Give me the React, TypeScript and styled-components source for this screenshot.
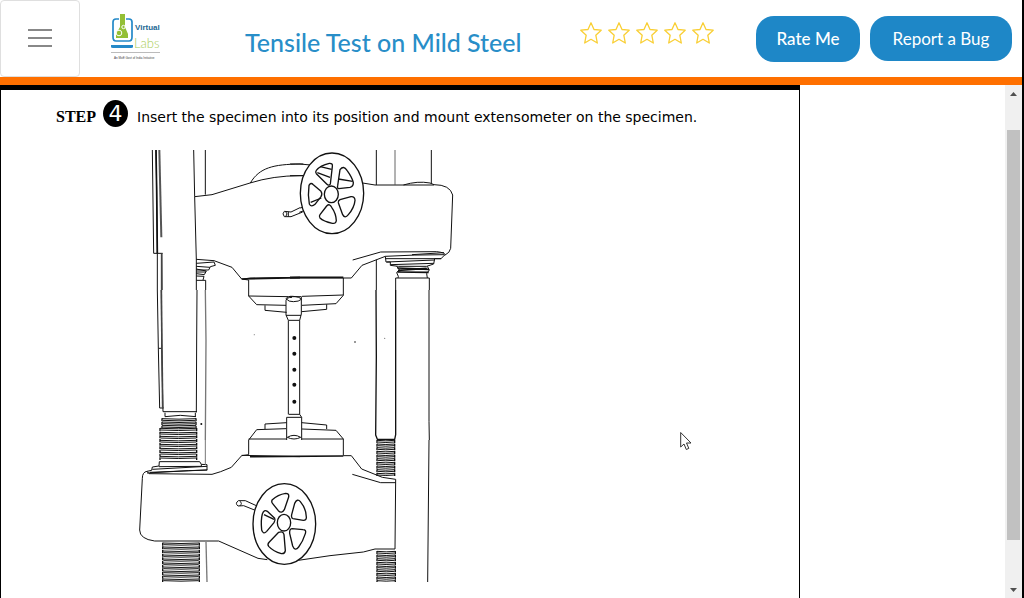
import React from 'react';
import styled, { createGlobalStyle } from 'styled-components';

const GlobalStyle = createGlobalStyle`
  *, *::before, *::after { box-sizing: border-box; }
  html, body, #root { height: 100%; }
  body { margin: 0; background: #fff; overflow: hidden; }
`;

const Page = styled.div`
  position: relative;
  display: flex;
  flex-direction: column;
  height: 100vh;
  border-right: 2px solid #000;
  font-family: Lato, 'Liberation Sans', sans-serif;
`;

const Header = styled.header`
  flex: none;
  display: flex;
  align-items: flex-start;
  height: 85px;
  padding-right: 10px;
  border-bottom: 8px solid #ff7000;
`;

const MenuButton = styled.button`
  display: flex;
  flex-direction: column;
  align-items: center;
  justify-content: center;
  gap: 6px;
  width: 80px;
  height: 77px;
  padding: 0 0 2px;
  background: #fff;
  border: 1px solid #dfdfdf;
  border-radius: 4px;
`;

const MenuBar = styled.span`
  width: 24px;
  height: 2px;
  background: #888;
`;

const LogoLink = styled.a`
  display: block;
  width: 50px;
  height: 48px;
  margin: 13px 0 0 31px;
`;

const Title = styled.h1`
  flex: 1;
  margin: 25px 0 0 84px;
  font-size: 25px;
  line-height: 34px;
  font-weight: 500;
  white-space: nowrap;
  color: #288ec8;
`;

const Stars = styled.div`
  display: flex;
  gap: 6px;
  margin: 22px 42px 0 0;
`;

const StarButton = styled.button`
  display: block;
  width: 22px;
  height: 22px;
  padding: 0;
  background: none;
  border: 0;
`;

const Actions = styled.div`
  display: flex;
  gap: 10px;
  margin-top: 16px;
`;

const ActionButton = styled.button<{ $wide?: boolean }>`
  width: ${(p) => (p.$wide ? 142 : 104)}px;
  height: ${(p) => (p.$wide ? 45 : 46)}px;
  padding: 0;
  border: 0;
  border-radius: 18px;
  background: #1e87c7;
  color: #fff;
  font-family: inherit;
  font-size: 17px;
  line-height: 24px;
  font-weight: ${(p) => (p.$wide ? 400 : 500)};
  white-space: nowrap;
`;

const Body = styled.div`
  flex: 1;
  min-height: 0;
  display: flex;
  justify-content: space-between;
`;

const Stage = styled.main`
  flex: 0 1 800px;
  overflow: hidden;
  padding: 9px 0 0 55px;
  border: solid #000;
  border-width: 5px 1px 0 1px;
`;

const Step = styled.div`
  display: flex;
  align-items: center;
  height: 36px;
`;

const StepLabel = styled.strong`
  font: bold 16px/20px 'Liberation Serif', serif;
  width: 47px;
`;

const StepNumber = styled.span`
  width: 25px;
  height: 27px;
  margin-bottom: 7px;
  border-radius: 50%;
  background: #000;
  color: #fff;
  text-align: center;
  font: 22px/27px 'DejaVu Sans', sans-serif;
`;

const StepText = styled.p`
  margin: 0 0 0 9px;
  font: 14px/20px 'DejaVu Sans', sans-serif;
  white-space: nowrap;
`;

const Drawing = styled.svg`
  display: block;
  width: 320px;
  height: 432px;
  margin: 15px 0 0 82px;
`;

const Scrollbar = styled.div`
  flex: none;
  display: flex;
  flex-direction: column;
  align-items: center;
  width: 17px;
  background: #f0f0f0;
`;

const ScrollArrow = styled.button`
  flex: none;
  display: flex;
  align-items: center;
  justify-content: center;
  width: 17px;
  height: 17px;
  padding: 0;
  border: 0;
  background: none;
`;

const Track = styled.div`
  flex: 1;
  padding-top: 28px;
`;

const Thumb = styled.div`
  width: 13px;
  height: 91%;
  background: #c1c1c1;
`;

const Pointer = styled.svg`
  position: absolute;
  left: 680px;
  top: 431px;
  width: 12px;
  height: 20px;
`;

function Logo() {
  return (
    <svg width="50" height="48" viewBox="0 0 50 48" role="img" aria-label="Virtual Labs">
      <path d="M8 6H5Q2 6 2 9V24Q2 28 5 28H18Q21 28 21 24V9Q21 6 18 6H15" fill="none" stroke="#2489c8" strokeWidth="1.7" />
      <path d="M9 1h5v13l3 7v4H5v-4l4-7z" fill="#94bf35" />
      <circle cx="8" cy="20" r="2.8" fill="#94bf35" stroke="#fff" />
      <circle cx="12.500" cy="14" r="1.700" fill="#94bf35" stroke="#fff" />
      <path d="M0 32H22V34Q22 35 20 35H2Q0 35 0 34Z" fill="#2489c8" />
      <text x="24" y="17" fontFamily="Liberation Sans, sans-serif" fontSize="8" fontWeight="700" fill="#236894">Virtual</text>
      <text x="23" y="35" fontFamily="Lato, sans-serif" fontSize="13" fontWeight="300" fill="#a9cc55">Labs</text>
      <path d="M0 39.500H49" stroke="#bbb" />
      <text x="3" y="46" fontFamily="Liberation Sans, sans-serif" fontSize="3" fill="#444">An MoE Govt of India Initiative</text>
    </svg>
  );
}

interface CoilProps {
  left: number;
  right: number;
  top: number;
  bottom: number;
  pitch?: number;
}

function Coil({ left, right, top, bottom, pitch = 11 }: CoilProps) {
  const turns: React.ReactNode[] = [];
  for (let y = top; y < bottom - 3; y += pitch) {
    turns.push(
      <path key={y} d={`M${left} ${y + 1} Q${(left + right) / 2} ${y + 4} ${right} ${y + 1} M${left + 2} ${y + 6} Q${(left + right) / 2} ${y + 9} ${right - 2} ${y + 6}`} />,
    );
  }
  return (
    <g>
      <g strokeWidth="3">{turns}</g>
      <path d={`M${left} ${top}V${bottom}M${right} ${top}V${bottom}`} strokeWidth="4" strokeDasharray="9 2" />
    </g>
  );
}

/* Drawn at three units to the pixel so that the fine line work stays in whole numbers. */
function TestingMachine() {
  return (
    <Drawing viewBox="0 0 960 1296" role="img" aria-label="Specimen held between the crossheads of a universal testing machine">
      <g fill="none" stroke="#111" strokeWidth="3" strokeLinejoin="round">
        <g transform="translate(-24 -30)">
          <path d="M67 30L71 340H98M78 30L80 150L82 340V450M95 340L96 450" />
          <path d="M78 30L80 150L82 340" strokeWidth="5" />
          <path d="M88 30L94 292" stroke="#555" strokeWidth="6" />
          <path d="M95 340L95 450" stroke="#444" strokeWidth="5" />
          <path d="M191 30L194 170L199 360V450M226 30V164M194 170L246 164L360 129Q430 107 510 107" />
          <path d="M361 129C388 83 430 73 510 72" />
          <path d="M199 358L252 362L306 382L335 417L356 420V450M340 417L360 414L510 412" />
          <path d="M199 370L252 366L256 376L241 380L236 390H199M199 379L240 382M199 387L229 393L223 404L199 401M199 396H228M199 408L222 409L219 420M199 421H227V450" />
          <path d="M335 417L510 413" strokeWidth="5" />
          <path d="M510 203L483 216L463 214Q455 221 463 230L483 230L518 216M467 215Q475 221 467 230M475 215V230" />
        </g>

        <g transform="translate(456 -30)">
          <path d="M30 107H40M30 72L62 75M30 72V72M0 72H40M0 107H40M30 204L38 202M28 217L42 212" />
          <path d="M259 30V135M424 30V131" />
          <path d="M315 30V134" stroke="#666" />
          <path d="M218 129L255 135H340Q383 122 420 129L432 134Q480 134 488 165L482 325Q480 338 464 346M340 135H432" />
          <path d="M188 360L272 336L440 335Q466 338 465 344L453 356H434L431 372L410 379H325L301 376V366H288L286 349Q370 344 463 344M286 349L216 376L184 414H0" />
          <path d="M286 356H454M290 366L434 360M302 374L431 370M366 344L462 338M320 379L328 389L320 398L325 409L324 414M412 379L418 390L410 401L412 414" />
          <path d="M322 384L417 388M324 391L410 385M322 396L416 397" strokeWidth="5" />
          <path d="M317 450V414H418V450M259 359V450M160 414V450" />
          <path d="M0 412H160" strokeWidth="5" />
          <ellipse cx="126" cy="160" rx="95" ry="121" fill="#fff" strokeWidth="4" />
          <ellipse cx="124" cy="163" rx="21" ry="25" strokeWidth="4" />
          <g strokeWidth="4">
            <path d="M79 91Q91 76 118 70Q129 69 127 80L121 132Q117 139 110 132L79 101Q75 96 79 91Z" />
            <path d="M150 89Q161 75 171 91Q187 113 190 128Q190 139 180 142L146 146Q141 145 143 137Z" />
            <path d="M150 179L183 170Q195 169 195 181Q193 203 175 224Q165 237 158 224L145 188Q144 182 150 179Z" />
            <path d="M110 198Q119 189 125 202Q138 220 139 242Q137 252 127 250Q100 244 90 234Q86 229 90 224Z" />
            <path d="M57 136Q62 126 70 134L93 154Q98 161 93 170L75 193Q64 203 58 192Q53 165 57 136Z" />
            <path d="M91 80L125 88M82 98L120 112M145 117L188 124M62 187L94 174" />
          </g>
        </g>

        <g transform="translate(-24 420)">
          <path d="M82 0L85 175L89 354H101M94 0L95 175L99 365M85 175H95" />
          <path d="M94 0L98 354" strokeWidth="5" stroke="#444" />
          <path d="M201 0L200 150L199 367M99 365H201M105 368V380M196 368V380M105 380Q150 372 198 380" />
          <path d="M226 0L228 150L226 450" stroke="#777" strokeWidth="4" />
          <path d="M356 0V18M356 18L475 20M356 18L380 44L468 46M405 46V61L470 67M468 31Q470 22 486 22M468 31V75L475 91" />
          <path d="M475 91V373M470 382V450M356 450L380 419L468 416M405 417V402L470 398M356 447H470" />
          <Coil left={96} right={198} top={385} bottom={414} pitch={10} />
          <Coil left={90} right={200} top={414} bottom={510} pitch={12} />
        </g>

        <g transform="translate(456 420)">
          <path d="M160 0V16L138 41L36 46M36 19L160 15M110 43V58L35 65M0 20H34V72L29 91V373L35 382V450" />
          <path d="M-12 26Q-8 18 8 19Q29 20 34 28M-12 26Q-4 36 10 35Q27 35 34 28M-12 76H33M-4 91H29M-4 373H29M-10 382H35M-8 442Q12 430 32 442Q12 452 -8 442" />
          <path d="M35 398L110 405V417M36 417L138 421L160 447V450M36 447H160" />
          <path d="M258 0L259 200L257 435L262 448H314L317 434V0" strokeWidth="4" />
          <path d="M417 0V395L418 450" />
          <g fill="#111" stroke="none">
            <circle cx="13" cy="144" r="6" />
            <circle cx="13" cy="191" r="6" />
            <circle cx="13" cy="239" r="6" />
            <circle cx="13" cy="284" r="6" />
            <circle cx="13" cy="335" r="6" />
            <circle cx="195" cy="156" r="3" fill="#777" />
            <circle cx="284" cy="145" r="2" fill="#777" />
            <circle cx="-266" cy="402" r="3" />
            <circle cx="-107" cy="134" r="2" fill="#999" />
          </g>
        </g>

        <g transform="translate(-24 870)">
          <path d="M88 65L87 78L67 81L65 91L51 94L57 101L246 103L272 95L304 82L335 47L356 44V0" />
          <path d="M88 65H209L214 73L231 74V90L175 92L51 99M87 80L214 79M67 88L231 79M214 73V80M60 97L232 90" />
          <path d="M51 94Q37 96 37 115L29 270Q29 297 74 303H266L384 355L412 359M335 46L510 50" />
          <path d="M226 0V75" stroke="#777" />
          <path d="M228 306L231 426" stroke="#777" strokeWidth="4" />
          <path d="M379 197L346 182H325Q314 190 324 198L341 197L376 211M329 183Q339 190 329 198" />
          <Coil left={98} right={208} top={308} bottom={426} pitch={12} />
          <ellipse cx="463" cy="252" rx="94" ry="121" fill="#fff" strokeWidth="4" />
          <ellipse cx="462" cy="248" rx="20" ry="25" strokeWidth="4" />
          <g strokeWidth="4">
            <path d="M427 179Q443 164 467 160Q478 160 476 171L463 209Q455 222 445 212L428 191Q423 185 427 179Z" />
            <path d="M397 222Q402 207 412 214L434 235Q437 240 432 248L410 274Q400 285 395 270Q392 240 397 222Z" />
            <path d="M446 277Q460 272 462 284L466 332Q465 342 454 341Q430 334 416 319Q411 313 418 306Z" />
            <path d="M494 190Q502 174 511 185Q529 207 529 231Q530 241 520 241L489 236Q483 234 485 224Z" />
            <path d="M486 266L519 269Q530 269 526 281Q519 304 506 321Q495 335 488 318L479 280Q478 267 486 266Z" />
            <path d="M402 224L432 238" />
          </g>
        </g>

        <g transform="translate(456 870)">
          <path d="M160 0V47H184L215 87L277 112L317 118M187 103L272 128H317M317 118L315 327H255L220 336L120 347L25 361" />
          <path d="M-120 50L160 48" strokeWidth="5" />
          <path d="M417 0L413 426" />
          <Coil left={261} right={314} top={0} bottom={110} pitch={11} />
          <Coil left={261} right={316} top={333} bottom={426} pitch={11} />
        </g>
      </g>
    </Drawing>
  );
}

export default function App() {
  return (
    <>
      <GlobalStyle />
      <Page>
        <Header>
          <MenuButton aria-label="Menu">
            <MenuBar />
            <MenuBar />
            <MenuBar />
          </MenuButton>
          <LogoLink href="#">
            <Logo />
          </LogoLink>
          <Title>Tensile Test on Mild Steel</Title>
          <Stars>
            {[1, 2, 3, 4, 5].map((n) => (
              <StarButton key={n} aria-label={`Rate ${n} out of 5`}>
                <svg width="22" height="22" viewBox="0 0 22 22" fill="none" stroke="#f9cf35" strokeWidth="1.300" strokeLinejoin="round">
                  <path d="M11 .8L14 7.500L21.200 8.200L15.800 13.200L17.300 21L11 17.300L4.700 21L6.200 13.200L.8 8.200L8 7.500Z" />
                </svg>
              </StarButton>
            ))}
          </Stars>
          <Actions>
            <ActionButton>Rate Me</ActionButton>
            <ActionButton $wide>Report a Bug</ActionButton>
          </Actions>
        </Header>
        <Body>
          <Stage>
            <Step>
              <StepLabel>STEP</StepLabel>
              <StepNumber>4</StepNumber>
              <StepText>Insert the specimen into its position and mount extensometer on the specimen.</StepText>
            </Step>
            <TestingMachine />
          </Stage>
          <Scrollbar>
            <ScrollArrow aria-label="Scroll up">
              <svg width="7" height="4" viewBox="0 0 7 4"><path d="M0 4L3.500 0L7 4Z" fill="#505050" /></svg>
            </ScrollArrow>
            <Track>
              <Thumb />
            </Track>
            <ScrollArrow aria-label="Scroll down">
              <svg width="7" height="4" viewBox="0 0 7 4"><path d="M0 0L3.500 4L7 0Z" fill="#505050" /></svg>
            </ScrollArrow>
          </Scrollbar>
        </Body>
        <Pointer viewBox="0 0 12 20" aria-hidden="true">
          <path d="M.7 1.500V16L4 13L6.300 18.500L8.800 17.400L6.500 12H11Z" fill="#fff" stroke="#333" />
        </Pointer>
      </Page>
    </>
  );
}
